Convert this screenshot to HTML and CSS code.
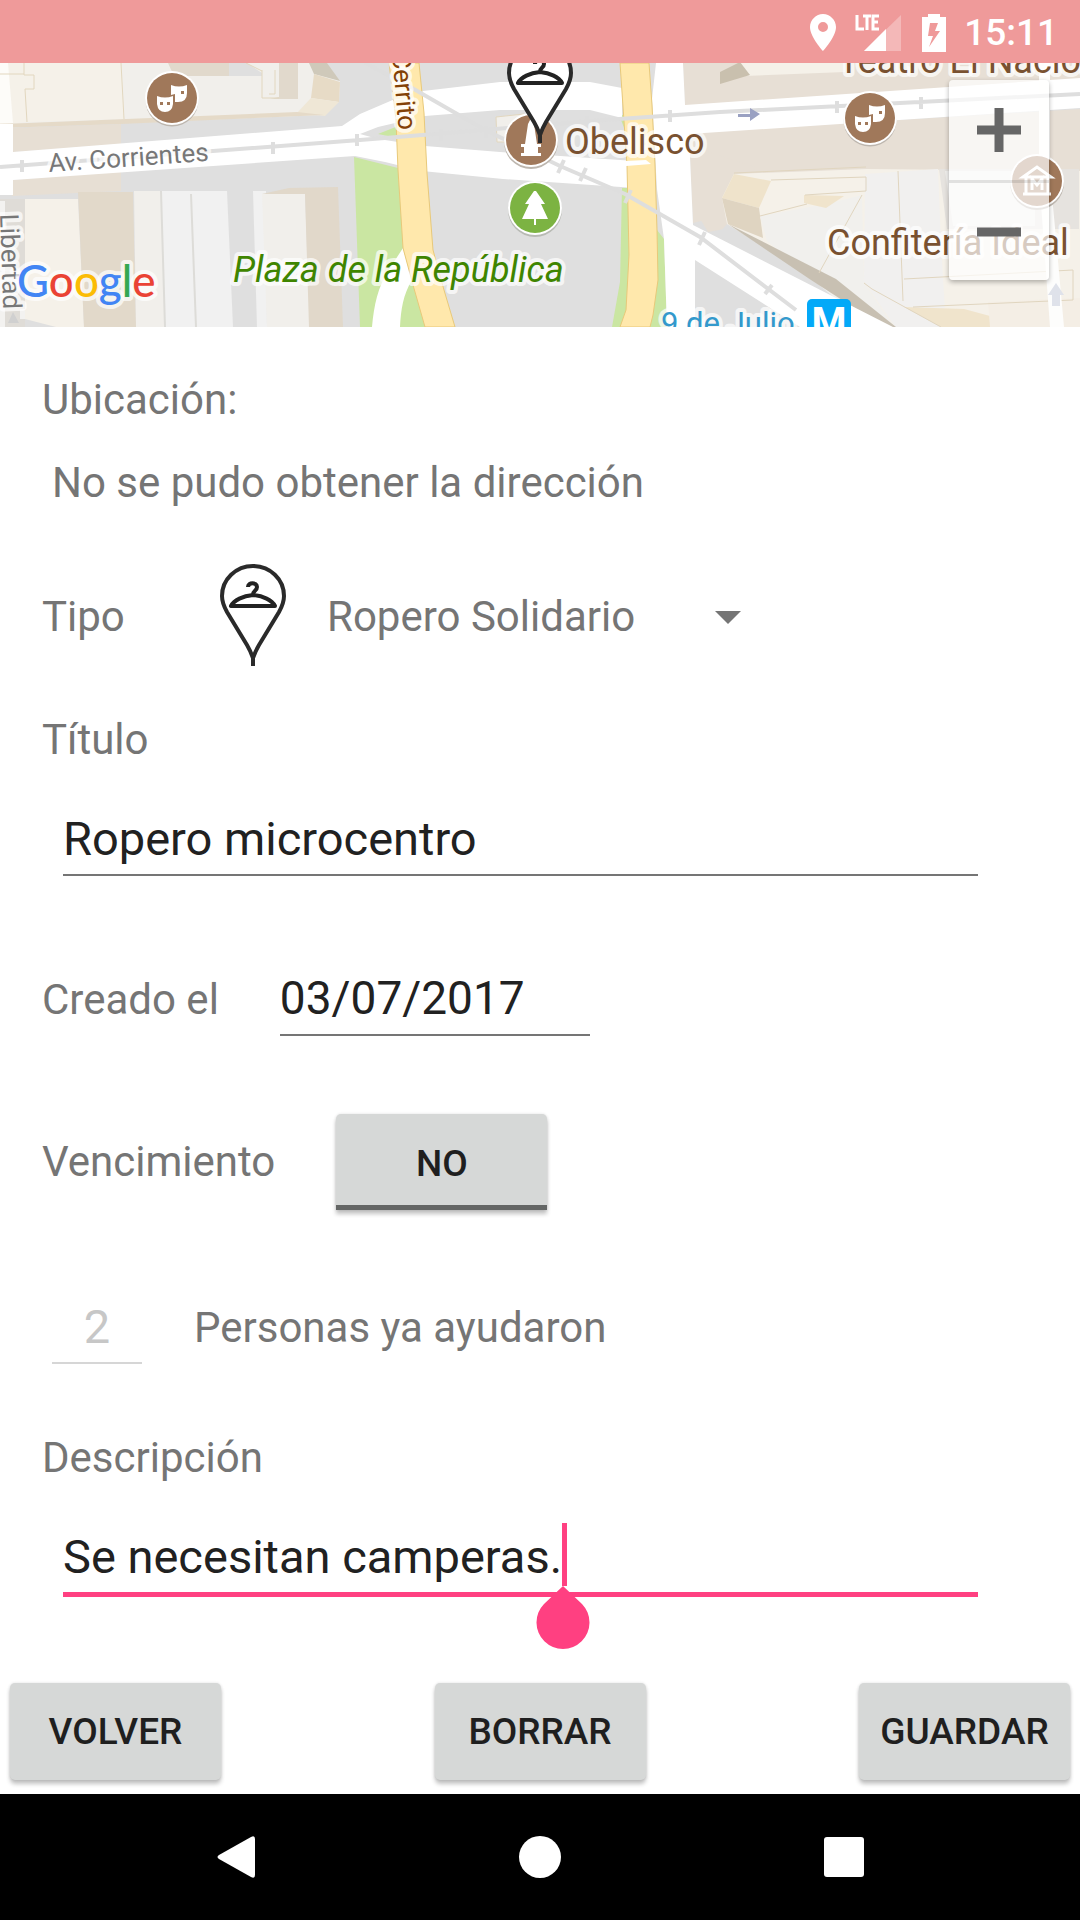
FILE: index.html
```html
<!DOCTYPE html>
<html lang="es">
<head>
<meta charset="utf-8">
<meta name="viewport" content="width=device-width, initial-scale=1">
<title>Ropero microcentro</title>
<link rel="stylesheet" href="styles.css">
</head>
<body>
<svg width="0" height="0" class="defs" aria-hidden="true">
  <symbol id="pin" viewBox="0 0 66 102">
    <path d="M33 102V94Q30 86 27 81L7 48Q2 39 2 32a31 30 0 0 1 62 0Q64 39 59 48L39 81Q36 86 33 94z" fill="#fff" stroke="#2a2a2a" stroke-width="4"/>
    <path d="M28 23c0-5 9-5 9 0 0 4-4 3-4 8-10 1-19 5-22 11h44c-3-6-12-10-22-11" fill="none" stroke="#222" stroke-width="4" stroke-linejoin="round"/>
  </symbol>
  <symbol id="masks" viewBox="0 0 54 56">
    <circle cx="27" cy="29" r="26.5" fill="#bdb6ae"/>
    <circle cx="27" cy="27" r="27" fill="#fff"/>
    <circle cx="27" cy="27" r="25" fill="#a0785a"/>
    <path d="M26 14q8 3 16 0v8q0 9-9 9h-3v-8l-4 1z" fill="#fff"/>
    <path d="M12 25q8 3 16 0v8q-1 8-8 8t-8-8z" fill="#fff"/>
    <path d="M15 31h3v3h-3zM22 31h3v3h-3zM36 20h3v3h-3z" fill="#a0785a"/>
  </symbol>
</svg>
<div class="screen">
  <header class="status">
    <svg width="26" height="38" viewBox="0 0 26 38" aria-label="Ubicación activa"><path fill="#fff" fill-rule="evenodd" d="M13 0C6 0 0 6 0 13c0 10 13 24 13 24s13-14 13-24C26 6 20 0 13 0zm0 8a5 5 0 1 1 0 10 5 5 0 0 1 0-10z"/></svg>
    <svg class="signal" width="48" height="38" viewBox="0 0 48 38" aria-label="LTE"><path d="M46 1v36H9z" fill="#fff" opacity=".3"/><path d="M31 15v22H9z" fill="#fff"/><path d="M2 1v14h7M8 2h8M12 2v14M24 2h-6v13h6M18 8h5" fill="none" stroke="#fff" stroke-width="3"/></svg>
    <svg class="battery" width="24" height="38" viewBox="0 0 24 38" aria-label="Cargando"><path fill="#fff" fill-rule="evenodd" d="M6 0h12v3h6v35H0V3h6zM8 9 6 22h5L7 33 18 17h-5l3-8z"/></svg>
    <time>15:11</time>
  </header>

  <section class="map" aria-label="Mapa">
    <svg class="map-canvas" viewBox="0 63 1080 264" preserveAspectRatio="xMidYMid slice">
      <rect y="63" width="1080" height="264" fill="#dfdfdf"/>
      <!-- west blocks -->
      <path d="M0 63h315l25 18-1 20-15 14L0 128z" fill="#f1efeb"/>
      <path d="M0 63h121l3 56-98 3L0 125z" fill="#f5f1e9"/>
      <path d="M0 63h8l5 60H0z" fill="#fdfcf9"/>
      <path d="M168 63h61v13h-55zM279 63h19v36h-28l9-2z" fill="#e1d9cc"/>
      <path d="M229 63h18l15 10v3h-33z" fill="#dfdfdf"/>
      <path d="M309 63h18l13 18-26-7z" fill="#cfc9ba"/>
      <path d="m314 74 26 8-1 20-28-4z" fill="#e7dbc6"/>
      <path d="m311 98 28 4-14 14-28-3z" fill="#efe7d6"/>
      <path d="m0 124 27-1 270-11 27 3-203 9L0 128z" fill="#e5dac8"/>
      <path d="M12 128 121 124v20L13 152zM13 180l108-9v20L12 196z" fill="#e7dfd4"/>
      <path d="M24 63v12h10v14h-9l2 33M121 63l3 56M0 74h24M246 63l16 8M262 70v28h17M275 70v24h-6" fill="none" stroke="#e2d7bf"/>
      <path d="M0 199h25v128H0z" fill="#dfdcd7"/>
      <path d="M0 201h5v126H0zM20 309h36v10H20z" fill="#f3f2f0"/>
      <path d="M25 199h53l6 128H56l-31-8z" fill="#f5f1e9"/>
      <path d="M78 192h55l3 135H84z" fill="#e2d9ca"/>
      <path d="M134 191h27l4 136h-29z" fill="#f1efeb"/>
      <path d="M161 191h66l6 136h-68z" fill="#f1f1f1"/>
      <path d="M253 191h13l1 136h-10z" fill="#f1f1f1"/>
      <path d="M262 194h43l5 133h-43z" fill="#f1efeb"/>
      <path d="M262 194l27-6 49-1 5 140h-34l-4-133z" fill="#e1d8ca"/>
      <path d="M161 191l4 136M191 194l5 133" fill="none" stroke="#dddcd8" stroke-width="2"/>
      <!-- green spaces -->
      <path d="M354 157l44 11 29 159h-67zM378 134l20-8v12z" fill="#cae6a2"/>
      <path d="M619 115h10l-2 20zM622 188h7l4 139h-21l8-45zM657 230l7 9 3 88h-18z" fill="#cae6a2"/>
      <!-- west and central avenues -->
      <path d="M0 124h13v28l329-26 18-12 35-15 28-8 77-9h90l32 6v30l-32-8h-90l-75 6-47 11-18 7 18 5 47 7 75 6 150 10v27l-147-10-81-8-37-9-30-6L13 180v15H0z" fill="#fff"/>
      <path d="M403 248l-15 23c-10 16-14 34-16 56h28c1-18 3-32 12-47z" fill="#fff"/>
      <path d="M496 117l28-3v28h-27z" fill="#f1efeb" stroke="#e2d7bf"/>
      <!-- east blocks -->
      <path d="M683 63h397v30l-395 13z" fill="#e7dfd5"/>
      <path d="M689 133l391-24v62l-190 2-197 50z" fill="#e7dfd5"/>
      <path d="M693 207l15 25 27-5 20-60-62-20z" fill="#e7dfd5"/>
      <path d="M720 232l7-8 110 55 60 48H720z" fill="#dfdfdf"/>
      <path d="M740 63h105v9l-100 4z" fill="#f5f1e9"/>
      <path d="M720 72l20-10 10 13-30 9z" fill="#c9c0ae"/>
      <path d="M734 174l133-5 213 2v156H892L727 224l-5-26z" fill="#f5f1e9"/>
      <path d="M734 174l37 7-12 27-37-10z" fill="#efe3cb"/>
      <path d="m722 198 37 10 4 30-35-14z" fill="#dfd4c1"/>
      <path d="M760 216l66-12 36-9 2 88 30 44-32-6-95-80z" fill="#f1f0ed"/>
      <path d="M865 174l73-5 3 74 5 85h-50l-32-46z" fill="#f1f0ef"/>
      <path d="M939 169h140v60h-132z" fill="#e6e3df"/>
      <path d="M945 171h90v55h-82z" fill="#f2f1ef"/>
      <path d="M728 224l108 55 60 48h-12l-73-47z" fill="#c8c0b2"/>
      <path d="M804 195l40 1-18 12-22-5z" fill="#f0e4cc"/>
      <path d="M904 307l60 2 67 18h-90z" fill="#f0e4cc"/>
      <path d="M988 302l92-4v29h-90z" fill="#f4eee5"/>
      <path d="M734 173l132-6M771 180l95-3v14l-61 4M760 216l47-12M862 195l-43 78M864 283l8 6 69 38M898 171l5 130M904 279l169-9v30l-160 7" fill="none" stroke="#e0d5bf"/>
      <!-- east avenues -->
      <path d="M656 63h27l2 42 395-27v30l-391 26 4 91 200 102H800L695 260v67h-28l-3-88-7-50-5-90z" fill="#fff"/>
      <path d="M1039 63h11v110l14 154h-14l-11-150z" fill="#fdfdfc"/>
      <path d="M389 63h30l5 50 3 60 6 77 11 40 11 37h-30l-12-42-10-37-5-78-2-50zM620 63h29l3 42 3 60 2 65 1 50-5 35-3 12h-30l6-17 3-55-2-90z" fill="#ffe8ac" stroke="#e8c97a"/>
      <path d="M626 161l20-1 5 4-25 2z" fill="#fff"/>
      <!-- underground line -->
      <g fill="none" stroke="#dedede" stroke-width="4">
        <path d="M0 167l360-27 100-8 130-11 130-9 360-18M365 63l47 25 73 42 75 36 65 28 75 43 96 73M22 160v12M273 142v12M357 134v12M441 129v12M486 126v12M587 116v12M670 110v12M837 101v12M921 97v12M564 160l-6 13M586 168l-6 13M631 190l-6 13M705 232l-6 13M772 285l-7 9"/>
      </g>
      <path d="M738 114h12v-6l10 6-10 7v-4h-12z" fill="#9aa1c2"/>
      <path d="M1052 306v-11h-4l8-12 8 12h-4v11z" fill="#dfe2ea"/>
      <path d="m8 323 5-11 6 11z" fill="#d0d0d0"/>

      <!-- places -->
      <use href="#masks" x="145" y="71" width="54" height="56"/>
      <use href="#masks" x="843" y="91" width="54" height="56"/>
      <g>
        <circle cx="531" cy="142" r="27" fill="#bdb6ae"/>
        <circle cx="531" cy="140" r="27" fill="#fff"/>
        <circle cx="531" cy="140" r="25" fill="#a0785a"/>
        <path d="M528 124l3-6 3 6 3 20h4v3h-3v6h3v3h-20v-3h3v-6h-3v-3h4z" fill="#fff"/>
      </g>
      <g>
        <circle cx="535" cy="210" r="27" fill="#b8bab4"/>
        <circle cx="535" cy="208" r="27" fill="#fff"/>
        <circle cx="535" cy="208" r="25" fill="#7cb342"/>
        <path d="M534 191h2l9 13h-4l7 15h-12v6h-2v-6h-12l7-15h-4z" fill="#fff"/>
      </g>
      <g>
        <circle cx="1037" cy="183" r="27" fill="#bdb6ae"/>
        <circle cx="1037" cy="181" r="27" fill="#fff"/>
        <circle cx="1037" cy="181" r="25" fill="#a0785a"/>
        <path d="M1023 177l14-10 14 10zM1026 177v16M1048 177v16M1023 194h28M1032 190v-11l5 6 5-6v11" fill="none" stroke="#fff" stroke-width="3"/>
      </g>
      <rect x="807" y="299" width="44" height="44" rx="5" fill="#03a9f8"/>
      <g class="names">
        <text class="street" transform="translate(49 172) rotate(-4)">Av. Corrientes</text>
        <text class="street" transform="translate(0 214) rotate(88)">Libertad</text>
        <text class="avenue" transform="translate(392 53) rotate(85)">Cerrito</text>
        <text class="place" x="565" y="154">Obelisco</text>
        <text class="place" x="838" y="73">Teatro El Nacional</text>
        <text class="place" x="827" y="255">Confitería Ideal</text>
        <text class="park" x="233" y="282">Plaza de la República</text>
        <text class="station" x="661" y="334">9 de Julio</text>
        <text class="metro" x="829" y="336">M</text>
        <text class="google" x="17" y="297"><tspan fill="#4285f4">G</tspan><tspan fill="#ea4335">o</tspan><tspan fill="#fbbc05">o</tspan><tspan fill="#4285f4">g</tspan><tspan fill="#34a853">l</tspan><tspan fill="#ea4335">e</tspan></text>
      </g>
      <use href="#pin" x="507" y="41" width="66" height="102"/>
    </svg>
    <div class="zoom">
      <button type="button" aria-label="Acercar"><svg width="44" height="44" viewBox="0 0 44 44"><path d="M22 0v44M0 22h44" stroke="#666" stroke-width="9"/></svg></button>
      <button type="button" aria-label="Alejar"><svg width="44" height="44" viewBox="0 0 44 44"><path d="M0 22h44" stroke="#666" stroke-width="9"/></svg></button>
    </div>
  </section>

  <form class="form">
    <div class="fields">
      <p class="caption">Ubicación:</p>
      <p class="address">No se pudo obtener la dirección</p>

      <div class="row type-row">
        <label class="type-label" for="tipo">Tipo</label>
        <svg class="type-pin" width="66" height="102" aria-hidden="true"><use href="#pin"/></svg>
        <div class="spinner">
          <select id="tipo"><option>Ropero Solidario</option></select>
        </div>
      </div>

      <label class="caption" for="titulo">Título</label>
      <input class="line wide" id="titulo" type="text" value="Ropero microcentro">

      <div class="row date-row">
        <label for="creado">Creado el</label>
        <input class="line date" id="creado" type="text" value="03/07/2017">
      </div>

      <div class="row due-row">
        <span id="vence">Vencimiento</span>
        <button class="btn toggle" type="button" aria-pressed="false" aria-describedby="vence">NO</button>
      </div>

      <div class="row people-row">
        <input class="line count" id="personas" type="text" value="2" disabled>
        <label for="personas">Personas ya ayudaron</label>
      </div>

      <label class="caption" for="descripcion">Descripción</label>
      <div class="editing wide">
        <input class="line active" id="descripcion" type="text" value="Se necesitan camperas.">
        <span class="caret"></span>
        <svg class="handle" width="54" height="64" viewBox="0 0 54 64" aria-hidden="true"><path d="M27 0 8 18a26.500 26.500 0 1 0 38 0z" fill="#ff4081"/></svg>
      </div>
    </div>

    <div class="actions">
      <button class="btn" type="button">VOLVER</button>
      <button class="btn" type="button">BORRAR</button>
      <button class="btn" type="submit">GUARDAR</button>
    </div>
  </form>

  <nav class="navbar">
    <button type="button" aria-label="Atrás"><svg width="42" height="42" viewBox="0 0 42 42"><path d="M4 19 36 1q4-2 4 2v36q0 4-4 2L4 23q-3-2 0-4z" fill="#fff"/></svg></button>
    <button type="button" aria-label="Inicio"><svg width="42" height="42" viewBox="0 0 42 42"><circle cx="21" cy="21" r="21" fill="#fff"/></svg></button>
    <button type="button" aria-label="Recientes"><svg width="42" height="42" viewBox="0 0 42 42"><rect x="1" y="1" width="40" height="40" rx="3" fill="#fff"/></svg></button>
  </nav>
</div>
</body>
</html>
```

FILE: styles.css
```css
* { box-sizing: border-box; }

body {
  margin: 0;
  background: #fff;
  color: #757575;
  font: 42px/50px Roboto, sans-serif;
}

p { margin: 0; }
svg { display: block; }
.defs { position: absolute; }

button, input, select {
  margin: 0;
  padding: 0;
  border: 0;
  border-radius: 0;
  background: none;
  font: inherit;
  color: inherit;
  outline: 0;
}

.screen {
  display: flex;
  flex-direction: column;
  min-height: 100vh;
}

/* status bar */
.status {
  display: flex;
  align-items: center;
  justify-content: flex-end;
  height: 63px;
  padding: 2px 22px 0 0;
  background: #ef9a9a;
  color: #fff;
}
.signal { margin-left: 19px; }
.battery { margin-left: 19px; }
.status time {
  margin-left: 18px;
  font-size: 37px;
  font-weight: 500;
}

/* map */
.map { position: relative; height: 264px; overflow: hidden; }
.map-canvas { width: 100%; height: 100%; }
.names text {
  stroke: #fff;
  stroke-opacity: .7;
  stroke-width: 8px;
  stroke-linejoin: round;
  paint-order: stroke;
}
.place { font-size: 36px; fill: #795130; }
.park { font-size: 36px; font-style: italic; fill: #3f8500; }
.street { font-size: 26px; fill: #777; }
.avenue { font-size: 26px; fill: #834106; }
.station { font-size: 31px; fill: #3399cc; }
.names .metro { font-size: 40px; font-weight: 700; fill: #fff; stroke: none; text-anchor: middle; }
.google { font: 500 44px Lato, sans-serif; }

.zoom {
  position: absolute;
  top: 17px;
  right: 31px;
  width: 100px;
  border-radius: 4px;
  background: rgba(255, 255, 255, .7);
  box-shadow: 0 2px 5px rgba(0, 0, 0, .3);
}
.zoom button {
  display: grid;
  place-items: center;
  width: 100%;
  height: 100px;
}
.zoom button + button { border-top: 3px solid rgba(0, 0, 0, .1); }

/* form */
.form {
  display: flex;
  flex: 1;
  flex-direction: column;
  justify-content: space-between;
}
.fields {
  display: flex;
  flex-direction: column;
  padding: 48px 42px 0;
}
.address { margin-top: 33px; padding-left: 10px; }
.row { display: flex; align-items: center; }
.wide { margin: 39px 60px 0 21px; }

.type-row { height: 106px; margin: 56px 0 45px; }
.type-label { width: 178px; }
.type-pin { align-self: flex-start; }
.spinner { display: grid; align-items: center; margin-left: 41px; }
.spinner select, .spinner::after { grid-area: 1 / 1; }
.spinner select {
  width: 420px;
  height: 50px;
  appearance: none;
}
.spinner::after {
  content: "";
  justify-self: end;
  margin-right: 6px;
  border: 13px solid transparent;
  border-top-color: #757575;
  border-bottom: 0;
  pointer-events: none;
}

.line {
  height: 72px;
  padding-bottom: 2px;
  border-bottom: 2px solid #757575;
  color: #212121;
  font-size: 47px;
}
.date-row { gap: 61px; margin-top: 88px; }
.date { width: 310px; font-size: 46px; }
.due-row { align-items: baseline; gap: 61px; margin-top: 78px; }
.people-row { gap: 52px; margin: 82px 0 69px; padding-left: 10px; }
.count {
  width: 90px;
  border-color: #d6d6d6;
  color: #c7c7c7;
  text-align: center;
}

.editing { position: relative; }
.active {
  display: block;
  width: 100%;
  height: 75px;
  border-bottom: 5px solid #ff4081;
}
.caret {
  position: absolute;
  top: 1px;
  left: 499px;
  width: 5px;
  height: 63px;
  background: #ff4081;
}
.handle { position: absolute; top: 64px; left: 473px; }

/* buttons */
.btn {
  width: 211px;
  height: 97px;
  border-radius: 5px;
  background: #d6d8d7;
  box-shadow: 0 4px 4px rgba(0, 0, 0, .24), 0 0 3px rgba(0, 0, 0, .12);
  color: #1f1f1f;
  font-size: 37px;
  font-weight: 500;
}
.toggle {
  height: 96px;
  padding-top: 8px;
  border-bottom: 5px solid #646665;
  border-radius: 5px 5px 0 0;
}
.actions {
  display: flex;
  justify-content: space-between;
  padding: 86px 10px 14px;
}

/* navigation bar */
.navbar {
  display: flex;
  justify-content: center;
  gap: 262px;
  height: 126px;
  background: #000;
}
```
